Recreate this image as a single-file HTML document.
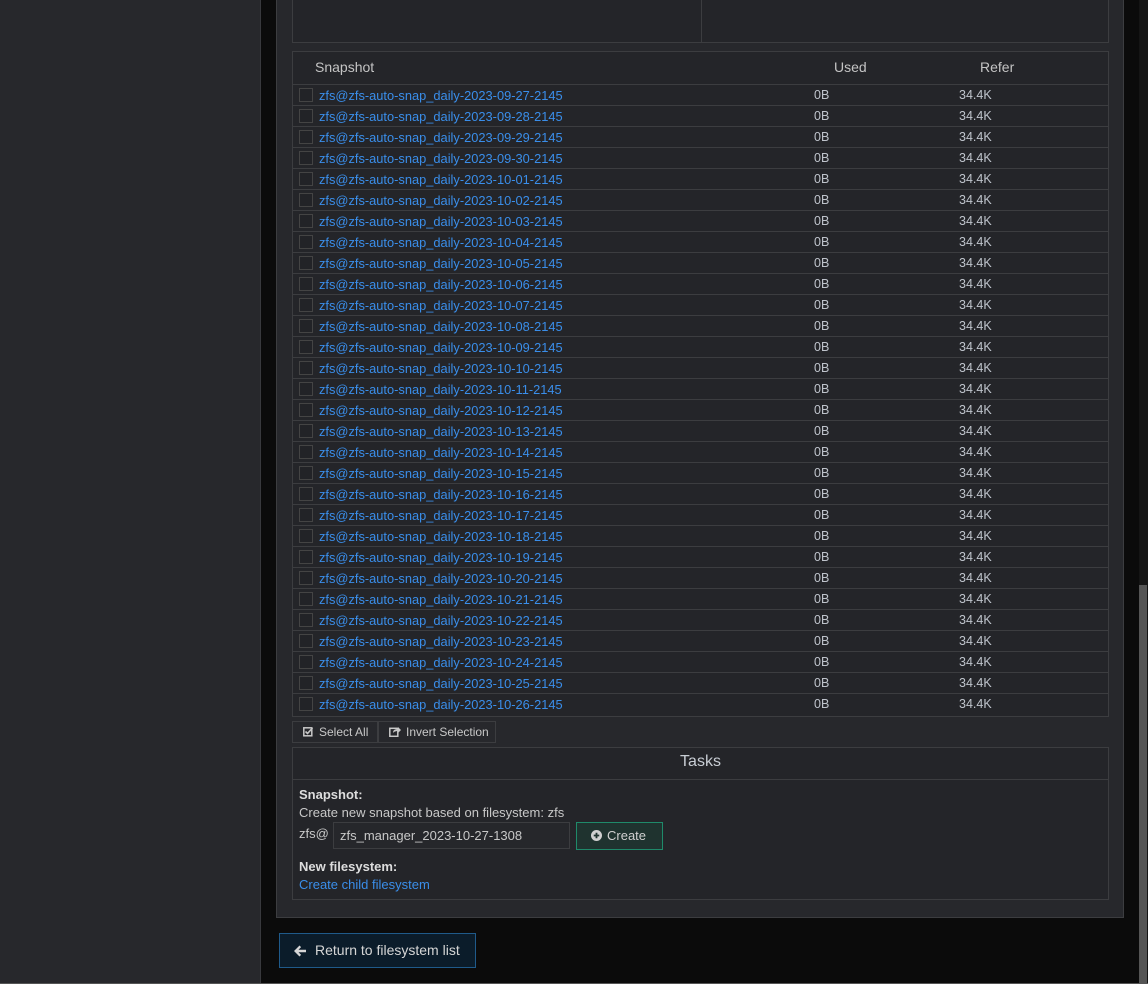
<!DOCTYPE html>
<html><head><meta charset="utf-8"><style>
*{box-sizing:border-box;margin:0;padding:0}
body{width:1148px;height:984px;overflow:hidden;background:#0b0b0b;font-family:"Liberation Sans",sans-serif;font-size:12.5px;color:#c8c8c8;position:relative}
.side{position:absolute;left:0;top:0;width:261px;height:984px;background:#27282c;border-right:1px solid #38393d}
.panel{position:absolute;left:276px;top:-2px;width:848px;height:920px;background:#27282c;border:1px solid #3c3d40}
.topbox{position:absolute;left:292px;top:-2px;width:817px;height:45px;border:1px solid #3c3d40;background:#242529}
.topbox .div{position:absolute;left:408px;top:0;width:1px;height:43px;background:#3c3d40}
.tbl{position:absolute;left:292px;top:51px;width:817px;height:666px;border:1px solid #3c3d40;background:#242529}
.hd{height:33px;border-bottom:1px solid #3c3d40;position:relative;font-size:14px;color:#c4c4c4}
.hd span{position:absolute;top:7px}
.row{height:21px;border-bottom:1px solid #3c3d40;position:relative}
.row:last-child{border-bottom:none}
.cb{position:absolute;left:6px;top:3px;width:14px;height:14px;border:1px solid #444;background:#222327}
.nm{position:absolute;left:26px;top:3px;color:#3a8eea;font-size:12.85px;white-space:nowrap}
.u{position:absolute;left:521px;top:3px;color:#bfc4cc}
.r{position:absolute;left:666px;top:3px;color:#bfc4cc}
.btns{position:absolute;left:292px;top:721px;height:22px;display:flex}
.btn{border:1px solid #3c3d40;height:22px;padding:0 8px;line-height:20px;color:#c8c8c8;font-size:12px;background:#27282c;white-space:nowrap}
.tasks{position:absolute;left:292px;top:747px;width:817px;height:153px;border:1px solid #3c3d40;background:#242529}
.th{height:32px;border-bottom:1px solid #3c3d40;text-align:center;font-size:16px;line-height:28px;color:#c8cdd4}
.b{font-weight:bold;color:#ddd;font-size:13px}
.inp{position:absolute;left:40px;top:74px;width:237px;height:27px;border:1px solid #3c3d40;background:#26272b;padding-left:6px;line-height:25px;font-size:13px;color:#c8c8c8}
.cr{position:absolute;left:283px;top:74px;width:87px;height:28px;border:1px solid #1f8a6a;background:#1f332f;color:#d0d0d0;line-height:26px;font-size:13px;padding-left:14px}
.ret{position:absolute;left:279px;top:933px;width:197px;height:35px;border:1px solid #1f5a8a;background:#0b1c2a;color:#d6d6d6;font-size:14px;line-height:33px;padding-left:35px;white-space:nowrap}
.sb{position:absolute;left:1139px;top:0;width:9px;height:984px;background:#151515}
.sb i{position:absolute;left:0;top:585px;width:8px;height:399px;background:#555}
</style></head><body>
<div class="side"></div>
<div class="panel"></div>
<div class="topbox"><div class="div"></div></div>
<div class="tbl">
<div class="hd"><span style="left:22px">Snapshot</span><span style="left:541px">Used</span><span style="left:687px">Refer</span></div>
<div class="row"><i class="cb"></i><span class="nm">zfs@zfs-auto-snap_daily-2023-09-27-2145</span><span class="u">0B</span><span class="r">34.4K</span></div>
<div class="row"><i class="cb"></i><span class="nm">zfs@zfs-auto-snap_daily-2023-09-28-2145</span><span class="u">0B</span><span class="r">34.4K</span></div>
<div class="row"><i class="cb"></i><span class="nm">zfs@zfs-auto-snap_daily-2023-09-29-2145</span><span class="u">0B</span><span class="r">34.4K</span></div>
<div class="row"><i class="cb"></i><span class="nm">zfs@zfs-auto-snap_daily-2023-09-30-2145</span><span class="u">0B</span><span class="r">34.4K</span></div>
<div class="row"><i class="cb"></i><span class="nm">zfs@zfs-auto-snap_daily-2023-10-01-2145</span><span class="u">0B</span><span class="r">34.4K</span></div>
<div class="row"><i class="cb"></i><span class="nm">zfs@zfs-auto-snap_daily-2023-10-02-2145</span><span class="u">0B</span><span class="r">34.4K</span></div>
<div class="row"><i class="cb"></i><span class="nm">zfs@zfs-auto-snap_daily-2023-10-03-2145</span><span class="u">0B</span><span class="r">34.4K</span></div>
<div class="row"><i class="cb"></i><span class="nm">zfs@zfs-auto-snap_daily-2023-10-04-2145</span><span class="u">0B</span><span class="r">34.4K</span></div>
<div class="row"><i class="cb"></i><span class="nm">zfs@zfs-auto-snap_daily-2023-10-05-2145</span><span class="u">0B</span><span class="r">34.4K</span></div>
<div class="row"><i class="cb"></i><span class="nm">zfs@zfs-auto-snap_daily-2023-10-06-2145</span><span class="u">0B</span><span class="r">34.4K</span></div>
<div class="row"><i class="cb"></i><span class="nm">zfs@zfs-auto-snap_daily-2023-10-07-2145</span><span class="u">0B</span><span class="r">34.4K</span></div>
<div class="row"><i class="cb"></i><span class="nm">zfs@zfs-auto-snap_daily-2023-10-08-2145</span><span class="u">0B</span><span class="r">34.4K</span></div>
<div class="row"><i class="cb"></i><span class="nm">zfs@zfs-auto-snap_daily-2023-10-09-2145</span><span class="u">0B</span><span class="r">34.4K</span></div>
<div class="row"><i class="cb"></i><span class="nm">zfs@zfs-auto-snap_daily-2023-10-10-2145</span><span class="u">0B</span><span class="r">34.4K</span></div>
<div class="row"><i class="cb"></i><span class="nm">zfs@zfs-auto-snap_daily-2023-10-11-2145</span><span class="u">0B</span><span class="r">34.4K</span></div>
<div class="row"><i class="cb"></i><span class="nm">zfs@zfs-auto-snap_daily-2023-10-12-2145</span><span class="u">0B</span><span class="r">34.4K</span></div>
<div class="row"><i class="cb"></i><span class="nm">zfs@zfs-auto-snap_daily-2023-10-13-2145</span><span class="u">0B</span><span class="r">34.4K</span></div>
<div class="row"><i class="cb"></i><span class="nm">zfs@zfs-auto-snap_daily-2023-10-14-2145</span><span class="u">0B</span><span class="r">34.4K</span></div>
<div class="row"><i class="cb"></i><span class="nm">zfs@zfs-auto-snap_daily-2023-10-15-2145</span><span class="u">0B</span><span class="r">34.4K</span></div>
<div class="row"><i class="cb"></i><span class="nm">zfs@zfs-auto-snap_daily-2023-10-16-2145</span><span class="u">0B</span><span class="r">34.4K</span></div>
<div class="row"><i class="cb"></i><span class="nm">zfs@zfs-auto-snap_daily-2023-10-17-2145</span><span class="u">0B</span><span class="r">34.4K</span></div>
<div class="row"><i class="cb"></i><span class="nm">zfs@zfs-auto-snap_daily-2023-10-18-2145</span><span class="u">0B</span><span class="r">34.4K</span></div>
<div class="row"><i class="cb"></i><span class="nm">zfs@zfs-auto-snap_daily-2023-10-19-2145</span><span class="u">0B</span><span class="r">34.4K</span></div>
<div class="row"><i class="cb"></i><span class="nm">zfs@zfs-auto-snap_daily-2023-10-20-2145</span><span class="u">0B</span><span class="r">34.4K</span></div>
<div class="row"><i class="cb"></i><span class="nm">zfs@zfs-auto-snap_daily-2023-10-21-2145</span><span class="u">0B</span><span class="r">34.4K</span></div>
<div class="row"><i class="cb"></i><span class="nm">zfs@zfs-auto-snap_daily-2023-10-22-2145</span><span class="u">0B</span><span class="r">34.4K</span></div>
<div class="row"><i class="cb"></i><span class="nm">zfs@zfs-auto-snap_daily-2023-10-23-2145</span><span class="u">0B</span><span class="r">34.4K</span></div>
<div class="row"><i class="cb"></i><span class="nm">zfs@zfs-auto-snap_daily-2023-10-24-2145</span><span class="u">0B</span><span class="r">34.4K</span></div>
<div class="row"><i class="cb"></i><span class="nm">zfs@zfs-auto-snap_daily-2023-10-25-2145</span><span class="u">0B</span><span class="r">34.4K</span></div>
<div class="row"><i class="cb"></i><span class="nm">zfs@zfs-auto-snap_daily-2023-10-26-2145</span><span class="u">0B</span><span class="r">34.4K</span></div>
</div>
<div class="btns">
<div class="btn" style="width:86px;padding-left:10px"><svg width="11" height="11" viewBox="0 0 11 11" style="vertical-align:-1px;margin-right:5px"><rect x="0.8" y="1.8" width="8" height="8" fill="none" stroke="#c8c8c8" stroke-width="1.5"/><path d="M2.5 5.5l2 2 5-5.5" fill="none" stroke="#c8c8c8" stroke-width="1.6"/></svg>Select All</div>
<div class="btn" style="width:118px;padding-left:10px"><svg width="12" height="11" viewBox="0 0 12 11" style="vertical-align:-1px;margin-right:5px"><rect x="0.8" y="2.3" width="8" height="8" fill="none" stroke="#c8c8c8" stroke-width="1.5"/><path d="M4 7c0-3 2-4 5-4V1l3 3-3 3V5c-2 0-4 .5-5 2z" fill="#c8c8c8"/></svg>Invert Selection</div>
</div>
<div class="tasks">
<div class="th">Tasks</div>
<div style="position:absolute;left:6px;top:39px" class="b">Snapshot:</div>
<div style="position:absolute;left:6px;top:57px;font-size:13px">Create new snapshot based on filesystem: zfs</div>
<div style="position:absolute;left:6px;top:78px;font-size:13px">zfs@</div>
<div class="inp">zfs_manager_2023-10-27-1308</div>
<div class="cr"><svg width="11" height="11" viewBox="0 0 12 12" style="vertical-align:-1px;margin-right:5px"><circle cx="6" cy="6" r="6" fill="#d0d0d0"/><path d="M6 3v6M3 6h6" stroke="#1f332f" stroke-width="2"/></svg>Create</div>
<div style="position:absolute;left:6px;top:111px" class="b">New filesystem:</div>
<div style="position:absolute;left:6px;top:129px;color:#3a8eea;font-size:13px">Create child filesystem</div>
</div>
<div class="ret"><svg width="12" height="12" viewBox="0 0 12 12" style="position:absolute;left:14px;top:11px"><path d="M0 6l5.5-5.5 1.6 1.6L4.5 4.7H12v2.6H4.5l2.6 2.6-1.6 1.6z" fill="#d6d6d6"/></svg>Return to filesystem list</div>
<div class="sb"><i></i></div>
<div style="position:absolute;left:0;top:983px;width:1148px;height:1px;background:#555"></div>
</body></html>
